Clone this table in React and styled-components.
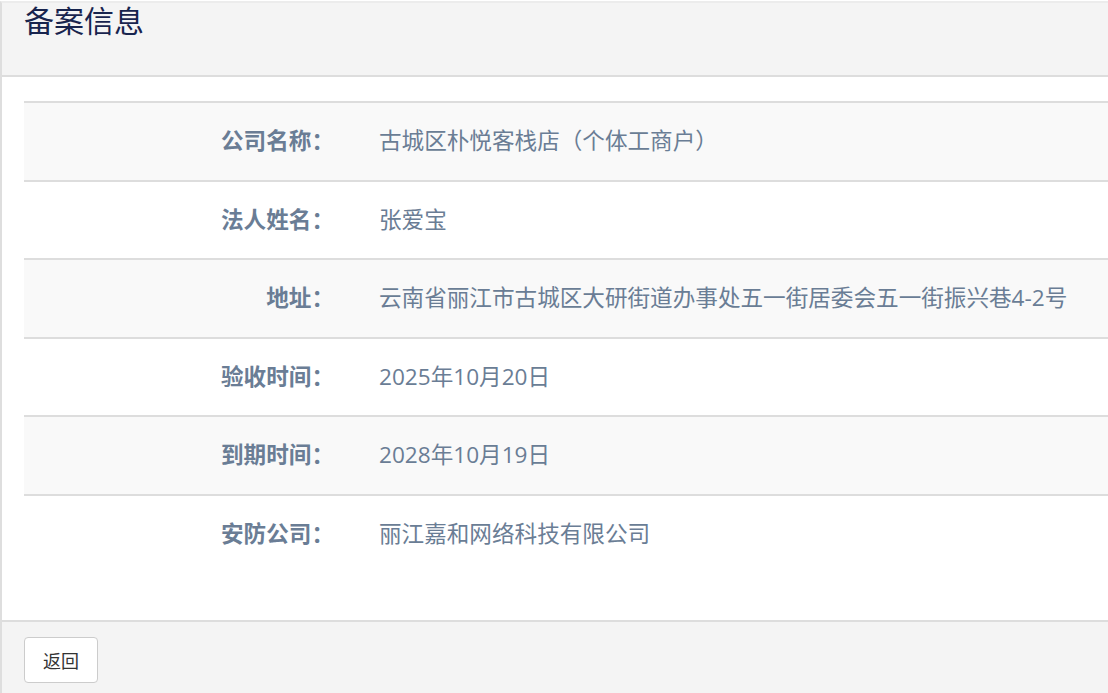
import React from "react";
import styled, { createGlobalStyle } from "styled-components";

const Global = createGlobalStyle`
  html, body { margin: 0; padding: 0; background: #fff; overflow: hidden; }
  body { font-family: "Open Sans", "Noto Sans CJK SC", sans-serif; }
`;

const Panel = styled.div`
  width: 1140px;
  border-top: 2px solid #ececec;
  border-left: 2px solid #dedede;
  margin-top: 1px;
  background: #fff;
`;

const Header = styled.div`
  height: 72px;
  background: #f4f4f4;
  border-bottom: 2px solid #dddddd;
  padding: 0 22px;
`;

const Title = styled.h3`
  margin: 0;
  font-size: 30px;
  line-height: 36px;
  font-weight: 400;
  color: #18244e;
`;

const Body = styled.div`
  padding: 24px 0 47px 22px;
`;

const Table = styled.div`
  border-top: 2px solid #dddddd;
`;

const Row = styled.div`
  display: grid;
  grid-template-columns: 310px 1fr;
  column-gap: 45px;
  align-items: center;
  padding: 24px 0;
  background: ${(p) => (p.$striped ? "#f9f9f9" : "#ffffff")};
  border-top: ${(p) => (p.$first ? "none" : "2px solid #dddddd")};
  font-size: 22.6px;
  line-height: 28.6px;
  color: #6a7d95;
`;

const Label = styled.div`
  text-align: right;
  font-weight: 700;
`;

const Value = styled.div`
  white-space: nowrap;
`;

const Footer = styled.div`
  background: #f4f4f4;
  border-top: 2px solid #dddddd;
  padding: 15px 22px 20px;
`;

const Button = styled.button`
  height: 46px;
  padding: 0 18px;
  background: #fff;
  border: 1px solid #cccccc;
  border-radius: 4px;
  font-family: "Open Sans", "Noto Sans CJK SC", sans-serif;
  font-size: 18px;
  color: #333;
  cursor: pointer;
`;

const rows = [
  ["公司名称：", "古城区朴悦客栈店（个体工商户）"],
  ["法人姓名：", "张爱宝"],
  ["地址：", "云南省丽江市古城区大研街道办事处五一街居委会五一街振兴巷4-2号"],
  ["验收时间：", "2025年10月20日"],
  ["到期时间：", "2028年10月19日"],
  ["安防公司：", "丽江嘉和网络科技有限公司"],
];

export default function App() {
  return (
    <>
      <Global />
      <Panel>
        <Header>
          <Title>备案信息</Title>
        </Header>
        <Body>
          <Table>
            {rows.map(([k, v], i) => (
              <Row key={k} $striped={i % 2 === 0} $first={i === 0}>
                <Label>{k}</Label>
                <Value>{v}</Value>
              </Row>
            ))}
          </Table>
        </Body>
        <Footer>
          <Button>返回</Button>
        </Footer>
      </Panel>
    </>
  );
}
